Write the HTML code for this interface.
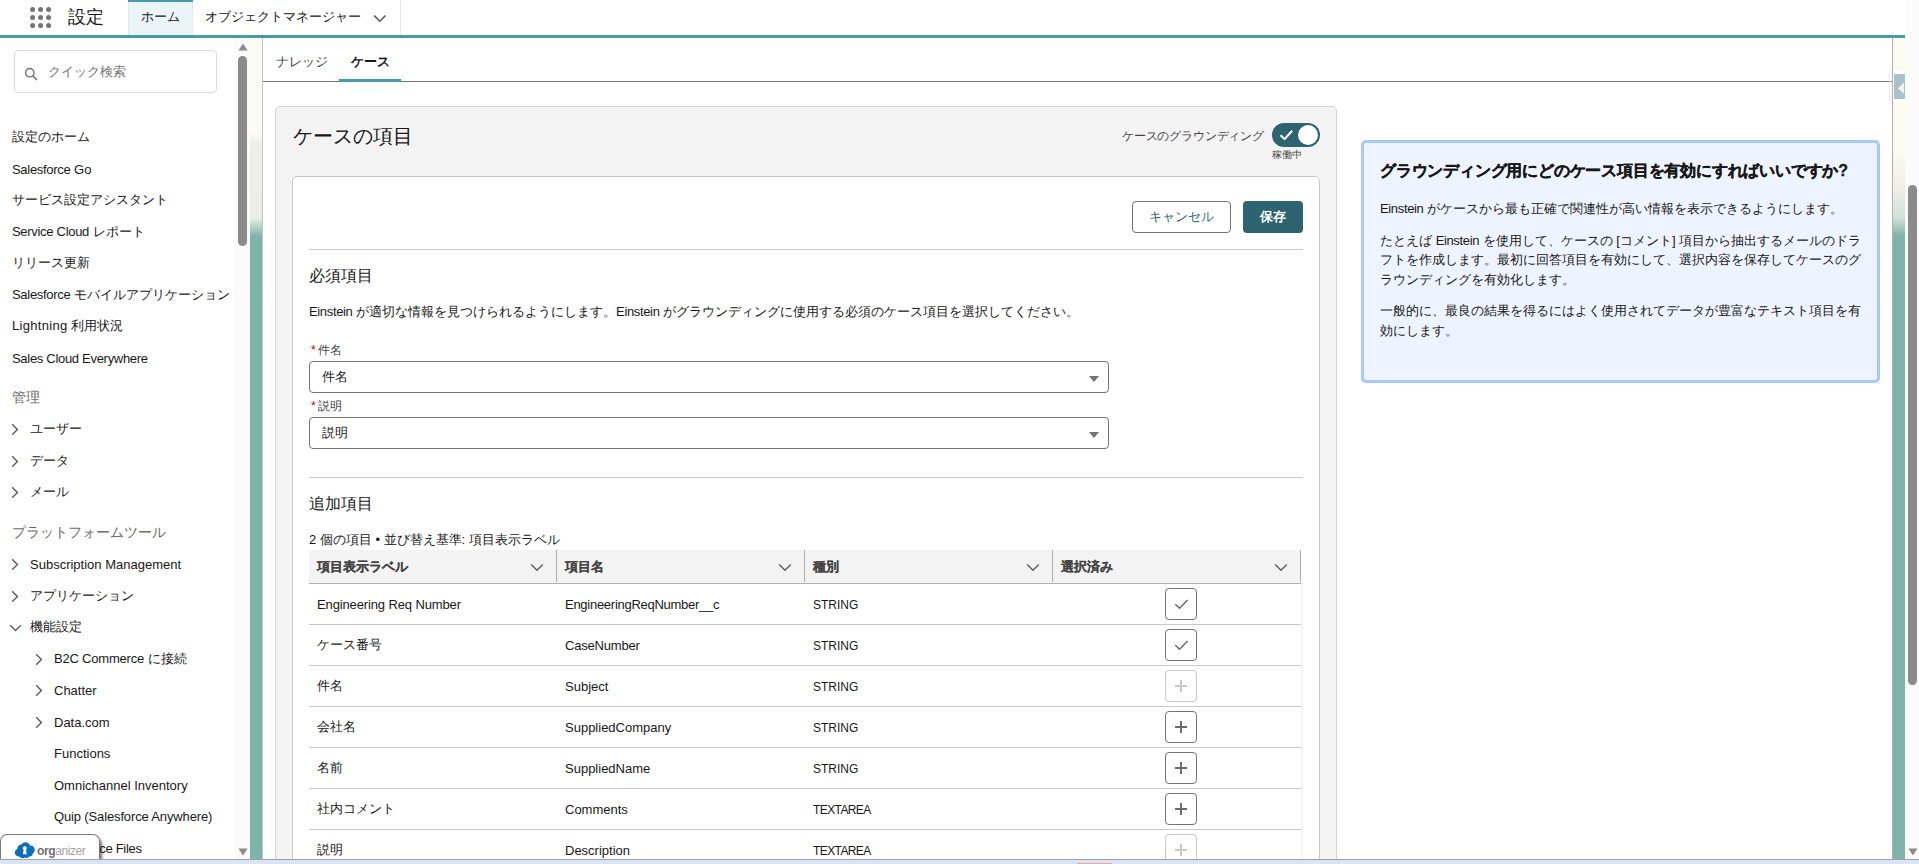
<!DOCTYPE html>
<html lang="ja">
<head>
<meta charset="utf-8">
<title>設定</title>
<style>
*{box-sizing:border-box;margin:0;padding:0}
html,body{width:1919px;height:864px;overflow:hidden;background:#fff}
body{position:relative;font-family:"Liberation Sans",sans-serif;font-size:13px;color:#181818;line-height:1}
.abs{position:absolute}
.t{position:absolute;white-space:nowrap;line-height:16px;height:16px}
/* header */
#hdr{position:absolute;left:0;top:0;width:1905px;height:35px;background:#fff}
#hline{position:absolute;left:0;top:35px;width:1905px;height:3px;background:#489aa9}
#hometab{position:absolute;left:128px;top:0;width:65px;height:35px;background:#edf4f7;border-left:1px solid #e3e8ea;border-right:1px solid #e3e8ea}
#hometab:before{content:"";position:absolute;left:-1px;top:0;width:65px;height:2px;background:#489aa9}
#sep400{position:absolute;left:400px;top:0;width:1px;height:35px;background:#e5e5e5}
/* sidebar */
#side{position:absolute;left:0;top:38px;width:235px;height:821px;background:#fff;overflow:hidden}
#sidetrack{position:absolute;left:235px;top:38px;width:15px;height:821px;background:#fafafa}
#search{position:absolute;left:14px;top:12px;width:203px;height:43px;border:1px solid #dddbda;border-radius:4px;background:#fff}
.nav{position:absolute;white-space:nowrap;height:16px;line-height:16px;font-size:13px;color:#181818}
.navh{position:absolute;white-space:nowrap;height:16px;line-height:16px;font-size:14px;color:#6b6b6b}
.k{letter-spacing:-.3px}
.k2{letter-spacing:-.35px}
.chev{position:absolute;width:8px;height:12px}
/* strips */
.strip{position:absolute;top:38px;width:12px;height:821px}
#stripL{left:250px;background:linear-gradient(to bottom,#fdfaf0 0px,#fdfaf0 96px,#eef0e6 104px,#e9eee4 180px,#7fb4ac 198px,#7fb4ac 100%)}
#stripR{left:1893px;background:linear-gradient(to bottom,#fdfaf0 0px,#fdfaf0 112px,#f0efe4 150px,#cfe0d6 180px,#7fb4ac 198px,#7fb4ac 100%)}
/* main */
#main{position:absolute;left:262px;top:38px;width:1631px;height:821px;background:#fff;border-left:1px solid #c4c4c4;border-right:1px solid #b0b0b0;overflow:hidden}
#tabline{position:absolute;left:263px;top:81px;width:1629px;height:1px;background:#747474}
#tabul{position:absolute;left:339px;top:79px;width:62px;height:3px;background:#489aa9}
#card{position:absolute;left:275px;top:106px;width:1062px;height:800px;background:#f3f3f3;border:1px solid #d4d4d4;border-radius:5px}
#inner{position:absolute;left:292px;top:176px;width:1028px;height:720px;background:#fff;border:1px solid #c9c9c9;border-radius:5px}
.hr{position:absolute;left:309px;width:994px;height:1px;background:#c9c9c9}
.sel{position:absolute;left:309px;width:800px;height:32px;border:1px solid #747474;border-radius:4px;background:#fff}
.sel .v{position:absolute;left:12px;top:7px;line-height:16px;font-size:13px;white-space:nowrap}
.sel .tri{position:absolute;left:779px;top:14px;width:0;height:0;border-left:5px solid transparent;border-right:5px solid transparent;border-top:6px solid #747474}
.lbl{position:absolute;white-space:nowrap;font-size:12px;line-height:14px;height:14px;color:#444}
.lbl i{font-style:normal;color:#ba0517;margin-right:2px}
/* table */
#thead{position:absolute;left:309px;top:550px;width:992px;height:33px;background:#f3f3f3}
.th{position:absolute;top:559px;font-weight:bold;-webkit-text-stroke:.15px #444;font-size:13px;line-height:16px;white-space:nowrap;color:#444}
.colsep{position:absolute;top:550px;width:1px;height:32px;background:#aeaeae}
.rowline{position:absolute;left:309px;width:992px;height:1px;background:#c9c9c9}
.td{position:absolute;white-space:nowrap;font-size:13px;line-height:16px;height:16px;color:#181818}
.ibtn{position:absolute;left:1165px;width:32px;height:32px;border:1px solid #747474;border-radius:4px;background:#fff}
.ibtn.dis{border-color:#c9c9c9}
.ibtn svg{position:absolute;left:0;top:0}
.hchev{position:absolute;top:563px;width:14px;height:9px}
/* info */
#info{position:absolute;left:1361px;top:140px;width:519px;height:243px;border:3px solid #a9c8fd;border-radius:5px;background:#eef4ff}
.ip{position:absolute;left:1380px;white-space:nowrap;font-size:13px;line-height:16px;height:16px;color:#181818}
/* page scrollbar */
#ptrack{position:absolute;left:1905px;top:0;width:14px;height:859px;background:#fbfbfb}
#pthumb{position:absolute;left:1908px;top:185px;width:9px;height:500px;border-radius:5px;background:#8b8b8b}
#bottom{position:absolute;left:0;top:859px;width:1919px;height:5px;background:#dbe5f1;border-top:1px solid #9aa3ad}
/* organizer */
#org{position:absolute;left:0;top:834px;width:100px;height:26px;background:#fff;border:1px solid #7a7a7a;border-bottom:none;border-radius:7px 7px 0 0;box-shadow:3px 3px 3px -1px rgba(0,0,0,.55)}
</style>
</head>
<body>

<!-- ===== header ===== -->
<div id="hdr">
  <svg class="abs" style="left:30px;top:7px" width="22" height="22" viewBox="0 0 22 22">
    <g fill="#747474">
      <circle cx="2.6" cy="2.6" r="2.5"/><circle cx="10.6" cy="2.6" r="2.5"/><circle cx="18.6" cy="2.6" r="2.5"/>
      <circle cx="2.6" cy="10.6" r="2.5"/><circle cx="10.6" cy="10.6" r="2.5"/><circle cx="18.6" cy="10.6" r="2.5"/>
      <circle cx="2.6" cy="18.6" r="2.5"/><circle cx="10.6" cy="18.6" r="2.5"/><circle cx="18.6" cy="18.6" r="2.5"/>
    </g>
  </svg>
  <div class="t" style="left:68px;top:6px;font-size:18px;line-height:22px;height:22px;color:#181818">設定</div>
  <div id="hometab"></div>
  <div class="t" style="left:141px;top:9px;color:#181818">ホーム</div>
  <div class="t" style="left:205px;top:9px;color:#181818">オブジェクトマネージャー</div>
  <svg class="abs" style="left:372px;top:14px" width="15" height="10" viewBox="0 0 15 10"><path d="M2.2 1.6 L7.8 7.2 L13.4 1.6" fill="none" stroke="#5c5c5c" stroke-width="1.5"/></svg>
  <div id="sep400"></div>
</div>
<div id="hline"></div>

<!-- ===== sidebar ===== -->
<div id="side">
  <div id="search">
    <svg class="abs" style="left:9px;top:16px" width="15" height="15" viewBox="0 0 15 15"><circle cx="5.7" cy="5.7" r="4.2" fill="none" stroke="#747474" stroke-width="1.4"/><path d="M8.8 8.8 L13 13" stroke="#747474" stroke-width="1.6"/></svg>
    <div class="t" style="left:33px;top:13px;color:#747474">クイック検索</div>
  </div>
</div>
<div id="navwrap" class="abs" style="left:0;top:0;width:236px;height:859px;overflow:hidden">
  <div class="nav" style="left:12px;top:129px">設定のホーム</div>
  <div class="nav" style="left:12px;top:162px"><span class="k">Salesforce</span> Go</div>
  <div class="nav" style="left:12px;top:192px">サービス設定アシスタント</div>
  <div class="nav" style="left:12px;top:224px"><span class="k">Service Cloud</span> レポート</div>
  <div class="nav" style="left:12px;top:255px">リリース更新</div>
  <div class="nav" style="left:12px;top:287px"><span class="k">Salesforce</span> モバイルアプリケーション</div>
  <div class="nav" style="left:12px;top:318px"><span style="letter-spacing:.3px">Lightning</span> 利用状況</div>
  <div class="nav" style="left:12px;top:351px"><span class="k">Sales Cloud Everywhere</span></div>
  <div class="navh" style="left:12px;top:389px">管理</div>
  <svg class="abs" style="left:11px;top:423px" width="8" height="13" viewBox="0 0 8 13"><path d="M1.2 1.2 L6.4 6.5 L1.2 11.8" fill="none" stroke="#5c5c5c" stroke-width="1.4"/></svg>
  <div class="nav" style="left:30px;top:421px">ユーザー</div>
  <svg class="abs" style="left:11px;top:455px" width="8" height="13" viewBox="0 0 8 13"><path d="M1.2 1.2 L6.4 6.5 L1.2 11.8" fill="none" stroke="#5c5c5c" stroke-width="1.4"/></svg>
  <div class="nav" style="left:30px;top:453px">データ</div>
  <svg class="abs" style="left:11px;top:486px" width="8" height="13" viewBox="0 0 8 13"><path d="M1.2 1.2 L6.4 6.5 L1.2 11.8" fill="none" stroke="#5c5c5c" stroke-width="1.4"/></svg>
  <div class="nav" style="left:30px;top:484px">メール</div>
  <div class="navh" style="left:12px;top:524px">プラットフォームツール</div>
  <svg class="abs" style="left:11px;top:558px" width="8" height="13" viewBox="0 0 8 13"><path d="M1.2 1.2 L6.4 6.5 L1.2 11.8" fill="none" stroke="#5c5c5c" stroke-width="1.4"/></svg>
  <div class="nav" style="left:30px;top:557px">Subscription Management</div>
  <svg class="abs" style="left:11px;top:590px" width="8" height="13" viewBox="0 0 8 13"><path d="M1.2 1.2 L6.4 6.5 L1.2 11.8" fill="none" stroke="#5c5c5c" stroke-width="1.4"/></svg>
  <div class="nav" style="left:30px;top:588px">アプリケーション</div>
  <svg class="abs" style="left:9px;top:624px" width="13" height="8" viewBox="0 0 13 8"><path d="M1.2 1.2 L6.5 6.4 L11.8 1.2" fill="none" stroke="#5c5c5c" stroke-width="1.4"/></svg>
  <div class="nav" style="left:30px;top:619px">機能設定</div>
  <svg class="abs" style="left:35px;top:653px" width="8" height="13" viewBox="0 0 8 13"><path d="M1.2 1.2 L6.4 6.5 L1.2 11.8" fill="none" stroke="#5c5c5c" stroke-width="1.4"/></svg>
  <div class="nav" style="left:54px;top:651px"><span style="letter-spacing:-.2px">B2C Commerce</span> に接続</div>
  <svg class="abs" style="left:35px;top:684px" width="8" height="13" viewBox="0 0 8 13"><path d="M1.2 1.2 L6.4 6.5 L1.2 11.8" fill="none" stroke="#5c5c5c" stroke-width="1.4"/></svg>
  <div class="nav" style="left:54px;top:683px">Chatter</div>
  <svg class="abs" style="left:35px;top:716px" width="8" height="13" viewBox="0 0 8 13"><path d="M1.2 1.2 L6.4 6.5 L1.2 11.8" fill="none" stroke="#5c5c5c" stroke-width="1.4"/></svg>
  <div class="nav" style="left:54px;top:715px">Data.com</div>
  <div class="nav" style="left:54px;top:746px">Functions</div>
  <div class="nav" style="left:54px;top:778px">Omnichannel Inventory</div>
  <div class="nav" style="left:54px;top:809px"><span style="letter-spacing:-.14px">Quip (Salesforce Anywhere)</span></div>
  <div class="nav" style="left:54px;top:841px"><span class="k">Salesforce Files</span></div>
</div>

<div id="sidetrack">
  <svg class="abs" style="left:3px;top:5px" width="10" height="8" viewBox="0 0 10 8"><path d="M0.5 7.5 L5 0.5 L9.5 7.5 Z" fill="#8b8b8b"/></svg>
  <div class="abs" style="left:3px;top:18px;width:9px;height:190px;border-radius:5px;background:#8b8b8b"></div>
  <svg class="abs" style="left:3px;top:810px" width="10" height="8" viewBox="0 0 10 8"><path d="M0.5 0.5 L5 7.5 L9.5 0.5 Z" fill="#8b8b8b"/></svg>
</div>
<div id="stripL" class="strip"></div>

<!-- ===== main ===== -->
<div id="main"></div>
<div id="stripR" class="strip"></div>
<div class="t" style="left:276px;top:54px;color:#444">ナレッジ</div>
<div class="t" style="left:351px;top:54px;color:#181818;font-weight:bold">ケース</div>
<div id="tabline"></div><div id="tabul"></div>
<div id="card"></div>
<div class="t" style="left:293px;top:123px;font-size:20px;line-height:26px;height:26px;color:#181818">ケースの項目</div>
<div class="t" style="left:1122px;top:128px;font-size:12px;letter-spacing:-.18px;color:#444">ケースのグラウンディング</div>
<div class="abs" style="left:1272px;top:123px;width:48px;height:24px;border-radius:12px;background:#2e6370"></div>
<div class="abs" style="left:1298px;top:125px;width:20px;height:20px;border-radius:10px;background:#fff"></div>
<svg class="abs" style="left:1279px;top:129px" width="15" height="12" viewBox="0 0 15 12"><path d="M1.5 6.2 L5.6 10 L13.2 1.8" fill="none" stroke="#fff" stroke-width="2"/></svg>
<div class="t" style="left:1272px;top:148px;font-size:10px;line-height:13px;height:13px;color:#444">稼働中</div>
<div id="inner"></div>
<div class="abs" style="left:1132px;top:201px;width:99px;height:32px;border:1px solid #747474;border-radius:4px;background:#fff"></div>
<div class="t" style="left:1149px;top:209px;color:#2e6b78">キャンセル</div>
<div class="abs" style="left:1243px;top:201px;width:60px;height:32px;border-radius:4px;background:#2e6370"></div>
<div class="t" style="left:1260px;top:209px;color:#fff;font-weight:bold">保存</div>
<div class="hr" style="top:249px"></div>
<div class="t" style="left:309px;top:266px;font-size:16px;line-height:20px;height:20px;color:#181818">必須項目</div>
<div class="t" style="left:309px;top:304px;color:#181818"><span class="k2">Einstein</span> が適切な情報を見つけられるようにします。<span class="k2">Einstein</span> がグラウンディングに使用する必須のケース項目を選択してください。</div>
<div class="lbl" style="left:311px;top:343px"><i>*</i>件名</div>
<div class="sel" style="top:361px"><span class="v">件名</span><span class="tri"></span></div>
<div class="lbl" style="left:311px;top:399px"><i>*</i>説明</div>
<div class="sel" style="top:417px"><span class="v">説明</span><span class="tri"></span></div>
<div class="hr" style="top:477px"></div>
<div class="t" style="left:309px;top:494px;font-size:16px;line-height:20px;height:20px;color:#181818">追加項目</div>
<div class="t" style="left:309px;top:532px;color:#181818">2 個の項目 • 並び替え基準: 項目表示ラベル</div>
<div id="thead"></div><div class="abs" style="left:1301px;top:583px;width:2px;height:276px;background:#f4f4f4"></div>
<div class="th" style="left:317px">項目表示ラベル</div>
<svg class="hchev" style="left:530px" viewBox="0 0 14 9"><path d="M1.2 1.5 L7 7.3 L12.8 1.5" fill="none" stroke="#5c5c5c" stroke-width="1.4"/></svg>
<div class="colsep" style="left:556px"></div>
<div class="th" style="left:565px">項目名</div>
<svg class="hchev" style="left:778px" viewBox="0 0 14 9"><path d="M1.2 1.5 L7 7.3 L12.8 1.5" fill="none" stroke="#5c5c5c" stroke-width="1.4"/></svg>
<div class="colsep" style="left:804px"></div>
<div class="th" style="left:813px">種別</div>
<svg class="hchev" style="left:1026px" viewBox="0 0 14 9"><path d="M1.2 1.5 L7 7.3 L12.8 1.5" fill="none" stroke="#5c5c5c" stroke-width="1.4"/></svg>
<div class="colsep" style="left:1052px"></div>
<div class="th" style="left:1061px">選択済み</div>
<svg class="hchev" style="left:1274px" viewBox="0 0 14 9"><path d="M1.2 1.5 L7 7.3 L12.8 1.5" fill="none" stroke="#5c5c5c" stroke-width="1.4"/></svg>
<div class="colsep" style="left:1300px"></div>
<div class="rowline" style="top:583px;background:#b0b0b0"></div>
<div class="td" style="left:317px;top:597px"><span style="letter-spacing:-.13px">Engineering Req Number</span></div>
<div class="td" style="left:565px;top:597px"><span style="letter-spacing:-.27px">EngineeringReqNumber__c</span></div>
<div class="td" style="left:813px;top:597px"><span style="font-size:12px;letter-spacing:0px">STRING</span></div>
<div class="ibtn" style="top:588px"><svg width="30" height="30" viewBox="0 0 30 30"><path d="M9.3 15.2 L13.6 19.3 L21.6 11" fill="none" stroke="#6b6b6b" stroke-width="1.5"/></svg></div>
<div class="rowline" style="top:624px"></div>
<div class="td" style="left:317px;top:637px">ケース番号</div>
<div class="td" style="left:565px;top:638px"><span style="letter-spacing:-.2px">CaseNumber</span></div>
<div class="td" style="left:813px;top:638px"><span style="font-size:12px;letter-spacing:0px">STRING</span></div>
<div class="ibtn" style="top:629px"><svg width="30" height="30" viewBox="0 0 30 30"><path d="M9.3 15.2 L13.6 19.3 L21.6 11" fill="none" stroke="#6b6b6b" stroke-width="1.5"/></svg></div>
<div class="rowline" style="top:665px"></div>
<div class="td" style="left:317px;top:678px">件名</div>
<div class="td" style="left:565px;top:679px">Subject</div>
<div class="td" style="left:813px;top:679px"><span style="font-size:12px;letter-spacing:0px">STRING</span></div>
<div class="ibtn dis" style="top:670px"><svg width="30" height="30" viewBox="0 0 30 30"><path d="M9 15 H21 M15 9 V21" fill="none" stroke="#c9c9c9" stroke-width="2"/></svg></div>
<div class="rowline" style="top:706px"></div>
<div class="td" style="left:317px;top:719px">会社名</div>
<div class="td" style="left:565px;top:720px">SuppliedCompany</div>
<div class="td" style="left:813px;top:720px"><span style="font-size:12px;letter-spacing:0px">STRING</span></div>
<div class="ibtn" style="top:711px"><svg width="30" height="30" viewBox="0 0 30 30"><path d="M9 15 H21 M15 9 V21" fill="none" stroke="#6b6b6b" stroke-width="2"/></svg></div>
<div class="rowline" style="top:747px"></div>
<div class="td" style="left:317px;top:760px">名前</div>
<div class="td" style="left:565px;top:761px">SuppliedName</div>
<div class="td" style="left:813px;top:761px"><span style="font-size:12px;letter-spacing:0px">STRING</span></div>
<div class="ibtn" style="top:752px"><svg width="30" height="30" viewBox="0 0 30 30"><path d="M9 15 H21 M15 9 V21" fill="none" stroke="#6b6b6b" stroke-width="2"/></svg></div>
<div class="rowline" style="top:788px"></div>
<div class="td" style="left:317px;top:801px">社内コメント</div>
<div class="td" style="left:565px;top:802px">Comments</div>
<div class="td" style="left:813px;top:802px"><span style="font-size:12px;letter-spacing:-.6px">TEXTAREA</span></div>
<div class="ibtn" style="top:793px"><svg width="30" height="30" viewBox="0 0 30 30"><path d="M9 15 H21 M15 9 V21" fill="none" stroke="#6b6b6b" stroke-width="2"/></svg></div>
<div class="rowline" style="top:829px"></div>
<div class="td" style="left:317px;top:842px">説明</div>
<div class="td" style="left:565px;top:843px">Description</div>
<div class="td" style="left:813px;top:843px"><span style="font-size:12px;letter-spacing:-.6px">TEXTAREA</span></div>
<div class="ibtn dis" style="top:834px"><svg width="30" height="30" viewBox="0 0 30 30"><path d="M9 15 H21 M15 9 V21" fill="none" stroke="#c9c9c9" stroke-width="2"/></svg></div>
<div class="rowline" style="top:870px"></div>
<div id="info"></div>
<div class="ip" style="top:161px;font-size:16px;letter-spacing:-.2px;line-height:20px;height:20px;font-weight:bold;-webkit-text-stroke:.3px #181818">グラウンディング用にどのケース項目を有効にすればいいですか?</div>
<div class="ip" style="top:201px"><span class="k2">Einstein</span> がケースから最も正確で関連性が高い情報を表示できるようにします。</div>
<div class="ip" style="top:233px">たとえば <span class="k2">Einstein</span> を使用して、ケースの [コメント] 項目から抽出するメールのドラ</div>
<div class="ip" style="top:252px">フトを作成します。最初に回答項目を有効にして、選択内容を保存してケースのグ</div>
<div class="ip" style="top:272px">ラウンディングを有効化します。</div>
<div class="ip" style="top:303px">一般的に、最良の結果を得るにはよく使用されてデータが豊富なテキスト項目を有</div>
<div class="ip" style="top:323px">効にします。</div>
<div class="abs" style="left:1889px;top:70px;width:16px;height:33px;border:1px solid #e6e8ee;border-right:none;border-radius:5px 0 0 5px"></div>
<div class="abs" style="left:1893px;top:70px;width:12px;height:33px;background:#fffefb"></div>
<div class="abs" style="left:1892px;top:38px;width:1px;height:821px;background:#b0b0b0"></div>
<div class="abs" style="left:1894px;top:74px;width:11px;height:25px;background:#a9c2c8"></div>
<svg class="abs" style="left:1897px;top:82px" width="8" height="13" viewBox="0 0 8 13"><path d="M0.8 6.3 L7 0.5 L7 11.8 Z" fill="#f4f1ea"/></svg>
<div id="ptrack"></div><div id="pthumb"></div>
<svg class="abs" style="left:1908px;top:848px" width="10" height="8" viewBox="0 0 10 8"><path d="M0.5 0.5 L5 7.5 L9.5 0.5 Z" fill="#8b8b8b"/></svg>
<div id="org"></div>
<svg class="abs" style="left:14px;top:841px" width="22" height="18" viewBox="0 0 22 18"><path d="M5.2 15.6 C2.4 15.6 0.8 13.6 0.8 11.6 C0.8 9.8 1.9 8.4 3.4 7.9 C3.2 5.2 5.2 3.2 7.6 3.4 C8.6 1.8 10.4 1 12.2 1.3 C14 1.6 15.4 2.8 15.9 4.5 C18.6 4.2 20.8 6.2 20.8 8.8 C20.8 10.4 20 11.7 18.8 12.4 C18.6 14.4 16.9 15.7 15 15.5 C14 17 12.2 17.4 10.8 16.6 C9.2 17.6 6.6 17.2 5.2 15.6 Z" fill="#0b6fbe"/><path d="M10.8 5.2 a2 2 0 0 1 1.2 3.6 l0.7 4.4 h-3.8 l0.7 -4.4 a2 2 0 0 1 1.2 -3.6 Z" fill="#fff"/></svg>
<div class="t" style="left:37px;top:843px;font-size:12px;letter-spacing:-.4px;color:#a3a3a3"><b style="color:#6e6e6e">org</b>anizer</div>
<div id="bottom"></div>
<div class="abs" style="left:1077px;top:863px;width:35px;height:1px;background:#e8a79c"></div>

</body>
</html>
